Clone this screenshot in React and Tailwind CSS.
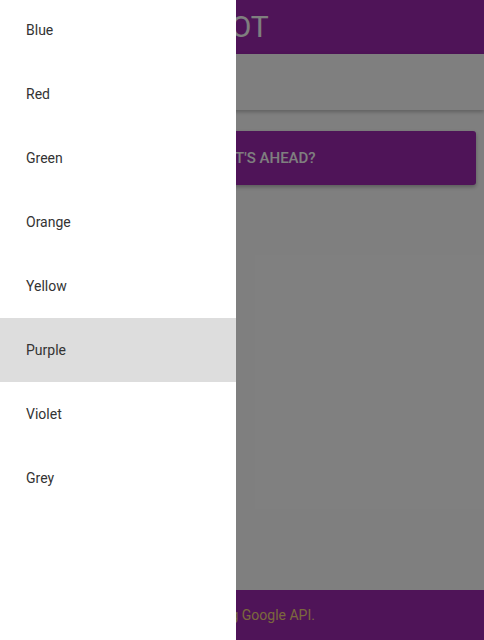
import { useState } from 'react';

const colors = ['Blue', 'Red', 'Green', 'Orange', 'Yellow', 'Purple', 'Violet', 'Grey'];

export default function App() {
  const [selected, setSelected] = useState('Purple');

  return (
    <div className="relative h-[640px] w-[484px] overflow-hidden bg-white font-['Roboto',sans-serif]">
      {/* app underneath */}
      <div className="flex h-full flex-col">
        <header className="flex h-[54px] shrink-0 items-center bg-[#9e28b0] pl-[110px]">
          <h1 className="text-[30px] font-normal leading-none text-white">COLOR BOT</h1>
        </header>
        <div className="h-[56px] shrink-0 bg-white shadow-[0_2px_4px_rgba(0,0,0,0.25)]" />
        <main className="flex-1 px-2 pt-[21px]">
          <button className="flex h-[54px] w-full items-center justify-center rounded-[3px] bg-[#9e28b0] pl-1 text-[15px] font-medium text-white shadow-[0_2px_4px_rgba(0,0,0,0.3)]">
            SEE WHAT'S AHEAD?
          </button>
        </main>
        <footer className="flex h-[50px] shrink-0 items-center justify-center bg-[#9e28b0] pl-[4px] text-[14px] text-[#f5d27a]">
          Built using Google API.
        </footer>
      </div>

      {/* dim overlay */}
      <div className="absolute inset-0 bg-black/50" />

      {/* drawer */}
      <nav className="absolute left-0 top-0 h-full w-[236px] bg-white">
        <ul className="-mt-[2px]">
          {colors.map((c) => (
            <li
              key={c}
              onClick={() => setSelected(c)}
              className={`flex h-16 cursor-pointer items-center pl-[26px] text-[14px] text-[#333] ${
                selected === c ? 'bg-[#dddddd]' : ''
              }`}
            >
              {c}
            </li>
          ))}
        </ul>
      </nav>
    </div>
  );
}
